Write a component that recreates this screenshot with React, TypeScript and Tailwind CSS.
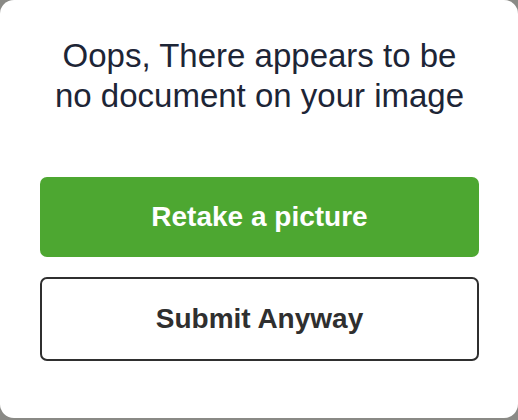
export default function App() {
  return (
    <div className="h-[420px] w-[518px] bg-[#8a8a86]">
      <div
        className="flex h-[418px] w-[518px] flex-col rounded-[14px] bg-white pl-10 pr-[39px] pt-[36px]"
        style={{ fontFamily: '"Liberation Sans", Arial, sans-serif' }}
      >
        <h1 className="text-center text-[33px] leading-[40px] font-normal text-[#1d2536]">
          Oops, There appears to be
          <br />
          no document on your image
        </h1>

        <button className="mt-[61px] flex h-[80px] w-full items-center justify-center rounded-[7px] bg-[#4da731] text-[28px] font-bold text-white">
          Retake a picture
        </button>

        <button className="mt-[20px] flex h-[84px] w-full items-center justify-center rounded-[7px] border-2 border-[#2f2f2f] bg-white text-[28px] font-bold text-[#2f2f2f]">
          Submit Anyway
        </button>
      </div>
    </div>
  );
}
